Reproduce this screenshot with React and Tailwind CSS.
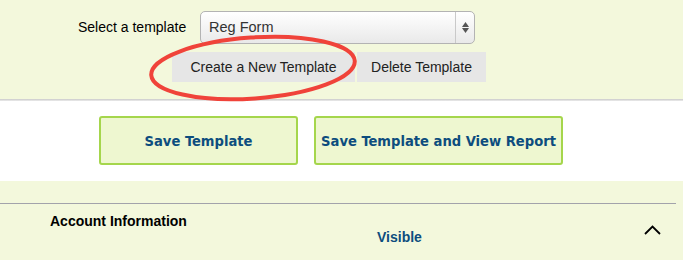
import { useState } from "react";

export default function App() {
  const [template, setTemplate] = useState("Reg Form");

  return (
    <div className="relative w-full h-[260px] overflow-hidden bg-white font-['Liberation_Sans',Arial,sans-serif]">
      {/* Template picker */}
      <div className="h-[99px] bg-[#f3f8dc] pt-[11px]">
        <div className="flex items-center ml-[78px] h-[33px]">
          <span className="text-[14px] text-black w-[108px] whitespace-nowrap">Select a template</span>
          <div className="relative ml-[14px] w-[275px] h-[33px] rounded-[5px] border border-[#b3b3b3] bg-gradient-to-b from-white to-[#e9e9e9] flex items-center">
            <span className="pl-[8px] text-[14.5px] text-[#333] flex-1">{template}</span>
            <div className="w-[19px] h-full border-l border-[#c9c9c9] flex flex-col items-center justify-center gap-[1px]">
              <svg width="7" height="5" viewBox="0 0 7 5"><path d="M3.5 0 L7 5 L0 5 Z" fill="#555" /></svg>
              <svg width="7" height="5" viewBox="0 0 7 5"><path d="M0 0 L7 0 L3.5 5 Z" fill="#555" /></svg>
            </div>
          </div>
        </div>
        <div className="flex gap-[2px] ml-[172px] mt-[8px]">
          <button
            onClick={() => setTemplate("New Template")}
            className="h-[30px] w-[183px] bg-[#e6e6e6] text-[14px] text-[#222]"
          >
            Create a New Template
          </button>
          <button className="h-[30px] w-[129px] bg-[#e6e6e6] text-[14px] text-[#222]">
            Delete Template
          </button>
        </div>
      </div>
      <div className="h-[2px] bg-gradient-to-b from-[#c9c9c9] to-[#ececec]" />

      {/* Save actions */}
      <div className="h-[80px] bg-white pt-[15px] flex gap-[16px] pl-[99px]">
        <button className="h-[49px] w-[199px] rounded-[3px] border-2 border-[#a5d64c] bg-[#eef7d0] text-[#0d4d7e] font-bold text-[14.6px] font-['DejaVu_Sans_Condensed','DejaVu_Sans',sans-serif] font-stretch-condensed">
          Save Template
        </button>
        <button className="h-[49px] w-[249px] rounded-[3px] border-2 border-[#a5d64c] bg-[#eef7d0] text-[#0d4d7e] font-bold text-[14.6px] font-['DejaVu_Sans_Condensed','DejaVu_Sans',sans-serif] font-stretch-condensed whitespace-nowrap">
          Save Template and View Report
        </button>
      </div>

      {/* Section header */}
      <div className="h-[79px] bg-[#f3f8dc] pt-[22px]">
        <div className="w-[676px] h-[1px] bg-[#a2a3ab]" />
        <div className="flex items-start pl-[50px] pt-[9px]">
          <span className="text-[14px] leading-[16px] font-bold text-black w-[327px]">Account Information</span>
          <span className="text-[14px] leading-[16px] font-bold text-[#0d4d7e] mt-[16px]">Visible</span>
          <svg className="ml-[222px] mt-[12px]" width="17" height="10" viewBox="0 0 17 10">
            <path d="M1 9 L8.5 1.5 L16 9" fill="none" stroke="#000" strokeWidth="1.8" />
          </svg>
        </div>
      </div>

      {/* Red annotation circle */}
      <svg className="absolute left-0 top-0 pointer-events-none" width="683" height="260">
        <ellipse cx="253" cy="68" rx="102" ry="30.5" fill="none" stroke="#f0433a" strokeWidth="4" transform="rotate(-4 253 68)" />
      </svg>
    </div>
  );
}
